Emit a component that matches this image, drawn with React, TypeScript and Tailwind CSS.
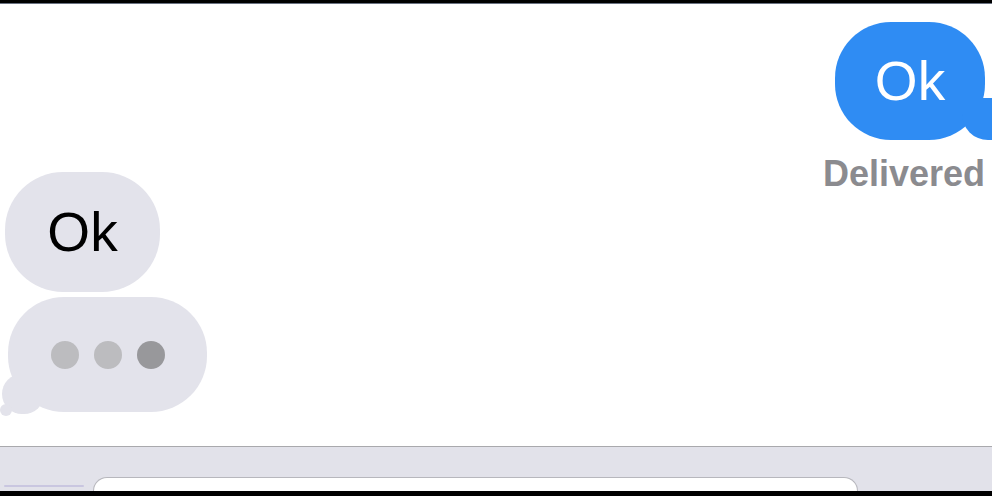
export default function App() {
  return (
    <div className="flex h-[496px] w-[992px] flex-col overflow-hidden bg-black font-['Liberation_Sans',Arial,sans-serif]">
      <div className="h-[4px] shrink-0 border-b border-gray-500 bg-black" />

      <div className="flex flex-1 flex-col bg-white">
        {/* outgoing */}
        <div className="mt-[18px] flex flex-col items-end pr-[7px]">
          <div className="relative flex h-[118px] w-[150px] items-center justify-center rounded-[56px] bg-[#2f8cf3]">
            <div className="absolute -right-[7px] bottom-0 h-[42px] w-[30px] rounded-bl-[26px] bg-[#2f8cf3]" />
            <span className="relative text-[55px] leading-none text-white">Ok</span>
          </div>
          <div className="mt-[24px] h-[20px] text-[36px] font-bold leading-[20px] text-[#8b8b8f]">
            Delivered
          </div>
        </div>

        {/* incoming */}
        <div className="-mt-[12px] flex flex-col items-start">
          <div className="ml-[5px] flex h-[120px] w-[155px] items-center justify-center rounded-[58px] bg-[#e3e3eb]">
            <span className="text-[55px] leading-none text-black">Ok</span>
          </div>

          <div className="relative ml-[8px] mt-[5px] flex h-[115px] w-[199px] items-center justify-center gap-[15px] rounded-[56px] bg-[#e3e3eb]">
            <div className="h-[28px] w-[28px] rounded-full bg-[#bcbcbf]" />
            <div className="h-[28px] w-[28px] rounded-full bg-[#bcbcbf]" />
            <div className="h-[28px] w-[28px] rounded-full bg-[#98989b]" />
            <div className="absolute -left-[6px] bottom-[-2px] h-[40px] w-[42px] rounded-full bg-[#e3e3eb]" />
            <div className="absolute -left-[8px] bottom-[-4px] h-[12px] w-[12px] rounded-full bg-[#e3e3eb]" />
          </div>
        </div>
      </div>

      {/* input bar */}
      <div className="flex h-[45px] shrink-0 flex-col justify-end border-t border-[#a9a9ad] bg-[#e2e2ea]">
        <div className="flex items-end">
          <div className="mb-[4px] ml-[4px] h-[2px] w-[80px] rounded bg-[#c9c6e0]" />
          <div className="ml-[9px] h-[14px] w-[765px] rounded-t-[18px] border border-b-0 border-[#b7b7bd] bg-white" />
        </div>
      </div>

      <div className="h-[5px] shrink-0 bg-black" />
    </div>
  );
}
